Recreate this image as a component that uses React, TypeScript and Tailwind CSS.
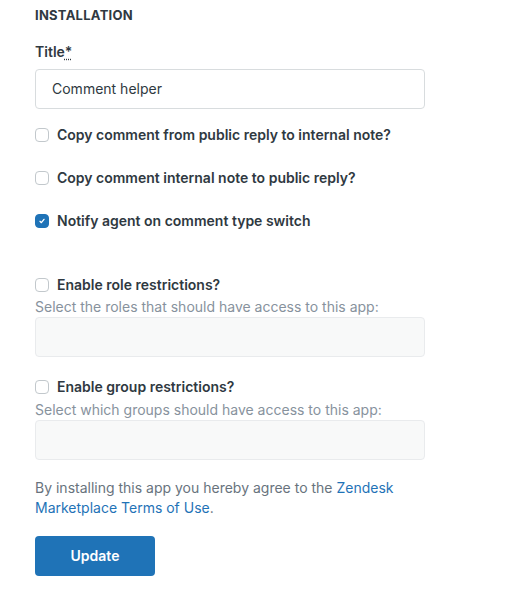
import React from 'react';

const Checkbox = ({ checked = false }: { checked?: boolean }) => (
  <span
    className={
      checked
        ? 'flex h-[14px] w-[14px] shrink-0 items-center justify-center rounded-[4px] border border-[#1f73b7] bg-[#1f73b7]'
        : 'flex h-[14px] w-[14px] shrink-0 items-center justify-center rounded-[4px] border border-[#c2c8cc] bg-white'
    }
  >
    {checked && (
      <svg width="8" height="8" viewBox="0 0 12 12" fill="none">
        <path d="M3 6.5l2 2 4-5" stroke="white" strokeWidth="2" strokeLinecap="round" strokeLinejoin="round" />
      </svg>
    )}
  </span>
);

const CheckRow = ({ label, checked, className }: { label: string; checked?: boolean; className: string }) => (
  <div className={`flex items-center gap-2 ${className}`}>
    <Checkbox checked={checked} />
    <span className="text-sm font-semibold leading-5 text-[#2f3941]">{label}</span>
  </div>
);

export default function App() {
  return (
    <div className="h-[596px] w-[510px] bg-white pl-[35px] pt-[5px] font-['Inter','Liberation_Sans',sans-serif]">
      {/* header */}
      <h2 className="text-[13px] font-bold uppercase leading-5 tracking-[0.02em] text-[#2f3941]">Installation</h2>

      {/* title field */}
      <label className="mt-[17px] block text-sm font-semibold leading-5 text-[#2f3941]">
        Title<abbr className="underline decoration-dotted underline-offset-2" title="required">*</abbr>
      </label>
      <div className="mt-[7px] flex h-10 w-[390px] items-center rounded-[4px] border border-[#d8dcde] bg-white px-4 text-sm text-[#2f3941]">
        Comment helper
      </div>

      <CheckRow className="mt-4" label="Copy comment from public reply to internal note?" />
      <CheckRow className="mt-[23px]" label="Copy comment internal note to public reply?" />
      <CheckRow className="mt-[23px]" label="Notify agent on comment type switch" checked />

      {/* role restrictions */}
      <CheckRow className="mt-[44px]" label="Enable role restrictions?" />
      <p className="mt-[2px] text-sm leading-5 text-[#87929d]">Select the roles that should have access to this app:</p>
      <div className="h-10 w-[390px] rounded-[4px] border border-[#e9ebed] bg-[#f8f9f9]" />

      {/* group restrictions */}
      <CheckRow className="mt-5" label="Enable group restrictions?" />
      <p className="mt-[3px] text-sm leading-5 text-[#87929d]">Select which groups should have access to this app:</p>
      <div className="h-10 w-[390px] rounded-[4px] border border-[#e9ebed] bg-[#f8f9f9]" />

      <p className="mt-[18px] w-[390px] text-sm leading-5 text-[#68737d]">
        By installing this app you hereby agree to the{' '}
        <a className="text-[#1f73b7]" href="#">Zendesk Marketplace Terms of Use</a>.
      </p>

      <button className="mt-[18px] h-10 w-[120px] rounded-[4px] bg-[#1f73b7] text-sm font-semibold text-white">
        Update
      </button>
    </div>
  );
}
